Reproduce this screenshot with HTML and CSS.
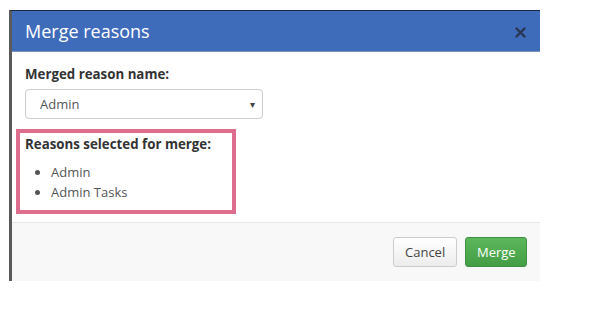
FILE: index.html
```html
<!DOCTYPE html>
<html lang="en">

<head>
    <meta charset="UTF-8">
    <title>Merge reasons</title>
    <link rel="stylesheet" href="styles.css">
</head>

<body>
    <div class="modal">
        <div class="modal-header">
            <h4 class="modal-title">Merge reasons</h4>
            <span class="close">
                <svg width="11" height="11" viewBox="0 0 11 11">
                    <path d="M1.5 1.5 L9.5 9.5 M9.5 1.5 L1.5 9.5" stroke="#2a3550" stroke-width="2.3" stroke-linecap="round" />
                </svg>
            </span>
        </div>
        <div class="modal-body">
            <label class="field-label">Merged reason name:</label>
            <div class="select-box">
                <span>Admin</span>
                <span class="caret">&#9662;</span>
            </div>
            <div class="highlight">
                <div class="field-label">Reasons selected for merge:</div>
                <ul class="reason-list">
                    <li>Admin</li>
                    <li>Admin Tasks</li>
                </ul>
            </div>
        </div>
        <div class="modal-footer">
            <button class="btn btn-default">Cancel</button>
            <button class="btn btn-success">Merge</button>
        </div>
    </div>
</body>

</html>
```

FILE: styles.css
```css
body {
    margin: 0;
    background: #fff;
    font-family: "Open Sans", "Liberation Sans", sans-serif;
    font-size: 13px;
    color: #333;
}

/* Dialog */
.modal {
    margin: 10px 0 0 9px;
    width: 528px;
    border-left: 3px solid #5a5a5a;
    border-top: 1px solid #1e2a44;
    background: #fff;
}

.modal-header {
    height: 40px;
    padding: 0 13px;
    display: flex;
    align-items: center;
    justify-content: space-between;
    background: #3f6bbb;
    border-bottom: 1px solid #7e93b8;
}

.modal-title {
    margin: 0;
    font-size: 18px;
    font-weight: normal;
    color: #fff;
    padding-bottom: 1px;
}

.close {
    display: flex;
    margin-right: 1px;
    margin-top: 2px;
}

.modal-body {
    padding: 12px 13px 8px;
}

.field-label {
    display: block;
    font-weight: bold;
    font-size: 13.3px;
    line-height: 20px;
    color: #333;
}

.select-box {
    margin-top: 5px;
    width: 238px;
    height: 30px;
    box-sizing: border-box;
    border: 1px solid #ccc;
    border-radius: 4px;
    padding: 0 7px 0 14px;
    display: flex;
    align-items: center;
    justify-content: space-between;
    color: #555;
}

.caret {
    font-size: 10px;
    color: #444;
}

/* Annotation frame */
.highlight {
    margin: 10px 0 0 -9px;
    width: 207px;
    border: 4px solid #df6e8e;
    padding: 1px 0 8px 5px;
}

.reason-list {
    margin: 8px 0 0;
    padding-left: 26px;
    color: #555;
    line-height: 20px;
}

.modal-footer {
    border-top: 1px solid #e8e8e8;
    background: #f8f8f8;
    padding: 14px 13px 14px;
    display: flex;
    justify-content: flex-end;
    gap: 8px;
}

.btn {
    height: 30px;
    padding: 0 11px;
    border-radius: 3px;
    font-family: inherit;
    font-size: 13px;
}

.btn-default {
    width: 64px;
    color: #444;
    border: 1px solid #ccc;
    background: linear-gradient(#fff, #ececec);
}

.btn-success {
    width: 62px;
    color: #fff;
    border: 1px solid #3d9140;
    background: linear-gradient(#5cb85c, #449d44);
}
```
